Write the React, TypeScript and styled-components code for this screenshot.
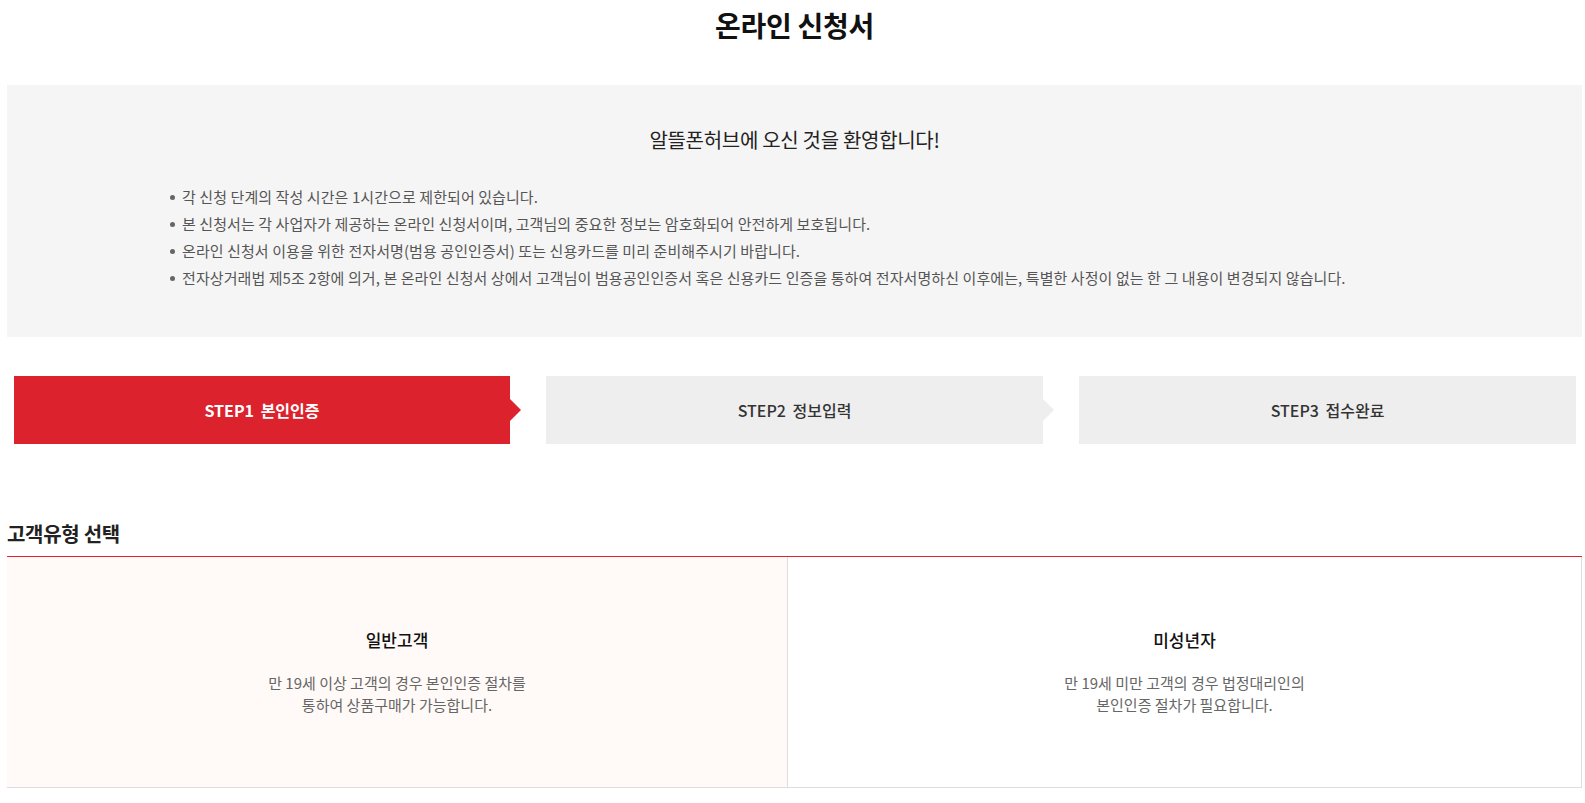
import styled, { createGlobalStyle } from 'styled-components';

const GlobalStyle = createGlobalStyle`
	html, body {
		margin: 0;
		padding: 0;
		background: #fff;
	}
	body {
		font-family: 'Noto Sans CJK KR', 'Noto Sans', sans-serif;
		color: #333;
	}
`;

const notices = [
	'각 신청 단계의 작성 시간은 1시간으로 제한되어 있습니다.',
	'본 신청서는 각 사업자가 제공하는 온라인 신청서이며, 고객님의 중요한 정보는 암호화되어 안전하게 보호됩니다.',
	'온라인 신청서 이용을 위한 전자서명(범용 공인인증서) 또는 신용카드를 미리 준비해주시기 바랍니다.',
	'전자상거래법 제5조 2항에 의거, 본 온라인 신청서 상에서 고객님이 범용공인인증서 혹은 신용카드 인증을 통하여 전자서명하신 이후에는, 특별한 사정이 없는 한 그 내용이 변경되지 않습니다.',
];

const steps = ['STEP1 본인인증', 'STEP2 정보입력', 'STEP3 접수완료'];

const customerTypes = [
	{
		title: '일반고객',
		desc: ['만 19세 이상 고객의 경우 본인인증 절차를', '통하여 상품구매가 가능합니다.'],
		active: true,
	},
	{
		title: '미성년자',
		desc: ['만 19세 미만 고객의 경우 법정대리인의', '본인인증 절차가 필요합니다.'],
		active: false,
	},
];

const App = () => {
	return (
		<>
			<GlobalStyle />
			<Page>
				<Title>온라인 신청서</Title>

				<Intro>
					<Welcome>알뜰폰허브에 오신 것을 환영합니다!</Welcome>
					<NoticeList>
						{notices.map((text) => (
							<Notice key={text}>{text}</Notice>
						))}
					</NoticeList>
				</Intro>

				<Steps>
					{steps.map((label, i) => (
						<Step key={label} $active={i === 0} $last={i === steps.length - 1}>
							{label}
						</Step>
					))}
				</Steps>

				<SectionTitle>고객유형 선택</SectionTitle>
				<TypeGrid>
					{customerTypes.map((type) => (
						<TypeCard key={type.title} $active={type.active}>
							<TypeName>{type.title}</TypeName>
							<TypeDesc>
								{type.desc.map((line) => (
									<span key={line}>{line}</span>
								))}
							</TypeDesc>
						</TypeCard>
					))}
				</TypeGrid>
			</Page>
		</>
	);
};

const Page = styled.div`
	width: 1575px;
	margin-left: 7px;
`;

const Title = styled.h1`
	margin: 0;
	height: 85px;
	padding-top: 6px;
	box-sizing: border-box;
	text-align: center;
	font-size: 28px;
	line-height: 38px;
	font-weight: 700;
	letter-spacing: -0.3px;
	color: #111;
`;

const Intro = styled.section`
	background-color: #f5f5f5;
	height: 252px;
	padding: 40px 0 0 165px;
	box-sizing: border-box;
`;

const Welcome = styled.h2`
	margin: 0 0 28px -165px;
	text-align: center;
	font-size: 20px;
	line-height: 30px;
	font-weight: 400;
	letter-spacing: -0.3px;
	color: #222;
`;

const NoticeList = styled.ul`
	margin: 0;
	padding: 0;
	list-style: none;
`;

const Notice = styled.li`
	position: relative;
	padding-left: 10px;
	font-size: 15px;
	line-height: 27px;
	letter-spacing: 0.08px;
	color: #555;

	&::before {
		content: '';
		position: absolute;
		left: -2px;
		top: 12px;
		width: 5px;
		height: 5px;
		border-radius: 50%;
		background: #666;
	}
`;

const Steps = styled.div`
	display: grid;
	grid-template-columns: 496px 497px 497px;
	column-gap: 36px;
	padding: 0 7px;
	margin-top: 39px;
`;

const Step = styled.div<{ $active: boolean; $last: boolean }>`
	position: relative;
	height: 68px;
	display: flex;
	align-items: center;
	justify-content: center;
	font-size: 16px;
	font-weight: ${(p) => (p.$active ? 700 : 500)};
	letter-spacing: 0;
	word-spacing: 3px;
	color: ${(p) => (p.$active ? '#fff' : '#333')};
	background-color: ${(p) => (p.$active ? '#dc222c' : '#eeeeee')};

	&::after {
		content: '';
		display: ${(p) => (p.$last ? 'none' : 'block')};
		position: absolute;
		top: 50%;
		left: 100%;
		margin-top: -11px;
		border-top: 11px solid transparent;
		border-bottom: 11px solid transparent;
		border-left: 11px solid ${(p) => (p.$active ? '#dc222c' : '#eeeeee')};
	}
`;

const SectionTitle = styled.h3`
	margin: 76px 0 0;
	padding-bottom: 8px;
	font-size: 20px;
	line-height: 28px;
	font-weight: 700;
	letter-spacing: -0.3px;
	color: #222;
	border-bottom: 1px solid #e1242c;
`;

const TypeGrid = styled.div`
	display: grid;
	grid-template-columns: 781px 1fr;
	border-bottom: 1px solid #dddddd;
	border-right: 1px solid #dddddd;
`;

const TypeCard = styled.div<{ $active: boolean }>`
	height: 230px;
	display: flex;
	flex-direction: column;
	align-items: center;
	padding-top: 69px;
	box-sizing: border-box;
	background-color: ${(p) => (p.$active ? '#fffaf7' : '#fff')};
	border-right: ${(p) => (p.$active ? '1px solid #dddddd' : 'none')};
`;

const TypeName = styled.strong`
	font-size: 17px;
	line-height: 28px;
	font-weight: 500;
	letter-spacing: 0;
	color: #111;
`;

const TypeDesc = styled.p`
	margin: 18px 0 0;
	display: flex;
	flex-direction: column;
	align-items: center;
	font-size: 15px;
	line-height: 22px;
	letter-spacing: 0;
	color: #666;
`;

export default App;
